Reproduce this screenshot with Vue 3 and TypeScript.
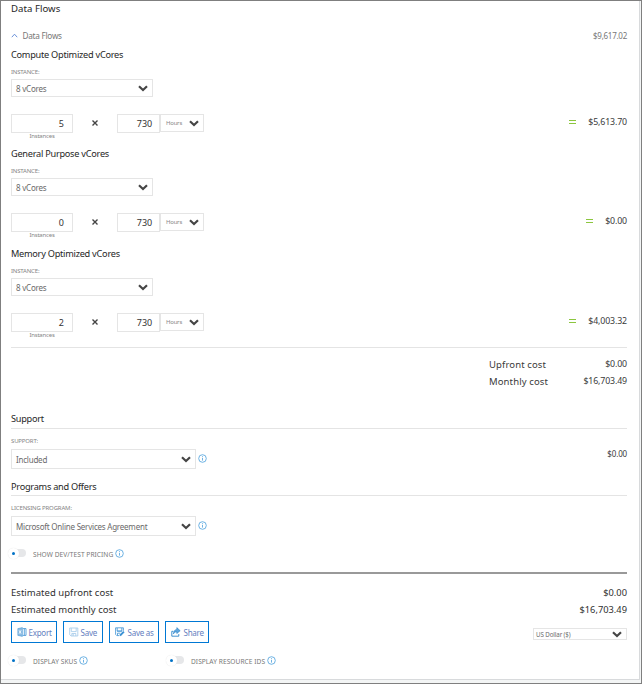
<script setup lang="ts">
import { ref } from 'vue'

interface Tier {
  name: string
  size: string
  instances: number
  hours: number
  total: string
}

const tiers = ref<Tier[]>([
  { name: 'Compute Optimized vCores', size: '8 vCores', instances: 5, hours: 730, total: '$5,613.70' },
  { name: 'General Purpose vCores', size: '8 vCores', instances: 0, hours: 730, total: '$0.00' },
  { name: 'Memory Optimized vCores', size: '8 vCores', instances: 2, hours: 730, total: '$4,003.32' },
])
</script>

<template>
  <div class="frame">
    <main class="panel">
      <h2 class="title">Data Flows</h2>
      <div class="collapse">
        <svg class="caret" viewBox="0 0 7 5"><path d="M.8 4.2 3.5 1.2l2.7 3" /></svg>
        <span class="collapse-name">Data Flows</span>
        <span class="collapse-price">$9,617.02</span>
      </div>

      <section v-for="tier in tiers" :key="tier.name" class="tier">
        <h3 class="heading">{{ tier.name }}</h3>
        <div class="label">INSTANCE:</div>
        <div class="select size-select">
          <span>{{ tier.size }}</span>
          <svg class="chev" viewBox="0 0 10 7"><path d="M1 1.3 5 5l4-3.7" /></svg>
        </div>
        <div class="calc">
          <div class="count">
            <div class="number">{{ tier.instances }}</div>
            <div class="unit">Instances</div>
          </div>
          <svg class="times" viewBox="0 0 6 6"><path d="m.5.5 5 5M5.5.5l-5 5" /></svg>
          <div class="number hours">{{ tier.hours }}</div>
          <div class="select period">
            <span>Hours</span>
            <svg class="chev" viewBox="0 0 10 7"><path d="M1 1.3 5 5l4-3.7" /></svg>
          </div>
          <span class="equals"></span>
          <span class="price">{{ tier.total }}</span>
        </div>
      </section>

      <div class="totals">
        <div class="total-row"><span class="total-name">Upfront cost</span><span class="price">$0.00</span></div>
        <div class="total-row"><span class="total-name">Monthly cost</span><span class="price">$16,703.49</span></div>
      </div>

      <section class="support">
        <h3 class="heading ruled">Support</h3>
        <div class="label">SUPPORT:</div>
        <div class="option">
          <div class="select wide-select">
            <span>Included</span>
            <svg class="chev" viewBox="0 0 10 7"><path d="M1 1.3 5 5l4-3.7" /></svg>
          </div>
          <svg class="info" viewBox="0 0 9 9"><circle cx="4.5" cy="4.5" r="3.8" /><path d="M4.5 3.8v2.8M4.5 2.2v.8" /></svg>
          <span class="small-price">$0.00</span>
        </div>
      </section>

      <section class="programs">
        <h3 class="heading ruled">Programs and Offers</h3>
        <div class="label">LICENSING PROGRAM:</div>
        <div class="option">
          <div class="select wide-select">
            <span>Microsoft Online Services Agreement</span>
            <svg class="chev" viewBox="0 0 10 7"><path d="M1 1.3 5 5l4-3.7" /></svg>
          </div>
          <svg class="info" viewBox="0 0 9 9"><circle cx="4.5" cy="4.5" r="3.8" /><path d="M4.5 3.8v2.8M4.5 2.2v.8" /></svg>
        </div>
        <div class="toggle-row">
          <span class="toggle"><i class="knob"></i></span>
          <span class="toggle-text">SHOW DEV/TEST PRICING</span>
          <svg class="info" viewBox="0 0 9 9"><circle cx="4.5" cy="4.5" r="3.8" /><path d="M4.5 3.8v2.8M4.5 2.2v.8" /></svg>
        </div>
      </section>

      <footer class="estimate">
        <div class="est-row"><span class="est-name">Estimated upfront cost</span><span class="est-price">$0.00</span></div>
        <div class="est-row"><span class="est-name">Estimated monthly cost</span><span class="est-price">$16,703.49</span></div>
        <div class="actions">
          <button class="btn export">
            <svg class="icon" viewBox="0 0 10 10"><path class="solid" d="M.8 1.6 5.4.6v8.8L.8 8.4z" /><path d="M5.8 1.6h3.2v6.8H5.8M7.3 1.6v6.8" /><path class="cut" d="m2.1 3.4 1.9 3.2M4 3.4 2.1 6.6" /></svg>
            <span>Export</span>
          </button>
          <button class="btn save">
            <svg class="icon pale" viewBox="0 0 10 10"><path d="M.7 1h8.1v8H2.1L.7 7.7zM2.3 1.2v3.4h4.9V1.2M2.8 8.8V6.5h4V9M4.2 7v2" /></svg>
            <span>Save</span>
          </button>
          <button class="btn save-as">
            <svg class="icon" viewBox="0 0 10 10"><path d="M4.3 8.6H1.8L.6 7.4V.8h7.8v3M2.2 1v3h4.6V1M2 4.2h5M2.5 8.3V6.2h2.8" /><path class="thick" d="M5 8.6 8.9 4.6" /></svg>
            <span>Save as</span>
          </button>
          <button class="btn share">
            <svg class="icon dark" viewBox="0 0 10 10"><path d="M2.4 4.3H.8v4.9h7V7.1" /><path class="solid" d="M5.8.6 9.2 3.7 5.8 6.6V5C4.2 4.9 3.1 5.5 2.4 7 2.5 4.2 3.8 2.6 5.8 2.4z" /></svg>
            <span>Share</span>
          </button>
          <div class="select currency">
            <span>US Dollar ($)</span>
            <svg class="chev" viewBox="0 0 10 7"><path d="M1 1.3 5 5l4-3.7" /></svg>
          </div>
        </div>
        <div class="toggle-row display">
          <div class="toggle-item first">
            <span class="toggle"><i class="knob"></i></span>
            <span class="toggle-text">DISPLAY SKUS</span>
            <svg class="info" viewBox="0 0 9 9"><circle cx="4.5" cy="4.5" r="3.8" /><path d="M4.5 3.8v2.8M4.5 2.2v.8" /></svg>
          </div>
          <div class="toggle-item">
            <span class="toggle"><i class="knob"></i></span>
            <span class="toggle-text">DISPLAY RESOURCE IDS</span>
            <svg class="info" viewBox="0 0 9 9"><circle cx="4.5" cy="4.5" r="3.8" /><path d="M4.5 3.8v2.8M4.5 2.2v.8" /></svg>
          </div>
        </div>
      </footer>
    </main>
  </div>
</template>

<style>
body { margin: 0; overflow: hidden; }
</style>

<style scoped>
* { box-sizing: border-box; }
.frame {
  width: 642px;
  height: 684px;
  border: 1px solid #7f7f7f;
  background: #f3f5f5;
  font-family: "Noto Sans", "Open Sans", sans-serif;
  color: #3a3a3a;
  white-space: nowrap;
}
.panel {
  width: 639px;
  height: 679px;
  padding: 0 12px 0 10px;
  border-right: 1px solid #d8dadc;
  border-bottom: 1px solid #d8dadc;
  background: #fff;
}
svg { display: block; flex: none; fill: none; overflow: visible; }
.title, .heading { margin: 0; font-weight: 400; color: #262626; }
.title { height: 16px; font-size: 9.6px; line-height: 16px; letter-spacing: .04px; }
.collapse { display: flex; align-items: center; height: 20px; margin-top: 8px; font-size: 8.2px; letter-spacing: -.25px; color: #777; }
.caret { width: 7px; height: 5px; stroke: #5a86d5; stroke-width: .9; }
.collapse-name { margin-left: 4.5px; }
.collapse-price { margin-left: auto; font-size: 8px; letter-spacing: -.26px; }
.tier { height: 99px; padding-top: 2px; }
.tier:nth-of-type(2) { height: 100px; }
.tier:nth-of-type(3) { height: 98px; }
.heading { height: 16px; font-size: 9.2px; line-height: 16px; letter-spacing: -.26px; }
.label { height: 10px; margin-top: 4px; font-size: 6px; line-height: 10px; letter-spacing: -.18px; color: #858585; }
.select {
  display: flex;
  align-items: center;
  justify-content: space-between;
  border: 1px solid #e5e5e5;
  font-size: 8px;
  letter-spacing: -.22px;
  color: #6a6a6a;
}
.chev { width: 10px; height: 7px; stroke: #454545; stroke-width: 2.2; }
.size-select { width: 142px; height: 18px; margin-top: 2px; padding: 0 4px; }
.calc { display: flex; height: 28px; margin-top: 17px; }
.count { width: 62px; }
.number { height: 19px; padding-right: 8px; border: 1px solid #e5e5e5; font-size: 9px; line-height: 18px; text-align: right; color: #333; }
.unit { height: 8px; font-size: 6px; line-height: 7px; text-align: center; letter-spacing: -.2px; color: #858585; }
.times { width: 6px; height: 6px; margin: 6px 19px 0 19px; stroke: #444; stroke-width: 1.4; }
.hours { width: 43px; padding-right: 7px; letter-spacing: -.1px; }
.period { width: 44px; height: 18px; padding: 0 4px 0 5px; font-size: 6px; color: #888; }
.equals { width: 7px; height: 4px; margin: 6px 12px 0 auto; border: solid #8cc63f; border-width: 1px 0; }
.price { font-size: 8.8px; line-height: 16px; letter-spacing: -.14px; color: #3a3a3a; }
.totals { height: 64px; margin-top: 6px; padding: 8px 0 0 478px; border-top: 1px solid #e4e4e4; }
.tier + .totals { margin-top: 5px; }
.total-row { display: flex; justify-content: space-between; height: 17px; line-height: 17px; }
.total-name { font-size: 9.5px; letter-spacing: .12px; }
.total-row .price { line-height: 17px; }
.ruled { height: 18px; border-bottom: 1px solid #e4e4e4; }
.support { height: 67px; }
.support .label, .programs .label { margin-top: 7px; letter-spacing: -.16px; }
.option { display: flex; margin-top: 3px; }
.wide-select { width: 185px; height: 20px; padding: 0 4px; }
.info { width: 9px; height: 9px; stroke: #4a9fdc; stroke-width: .8; }
.option .info { margin: 5px 0 0 1.5px; }
.small-price { margin-left: auto; font-size: 8px; line-height: 9px; letter-spacing: -.15px; }
.programs { height: 94px; }
.programs .heading { line-height: 17px; }
.toggle-row { display: flex; align-items: center; height: 14px; margin-top: 10px; }
.toggle { display: flex; align-items: center; width: 15px; height: 8px; border-radius: 4px; background: #e6e7e9; }
.knob { display: grid; flex: none; place-items: center; width: 11px; height: 11px; margin-left: -3px; border-radius: 50%; background: #fff; box-shadow: 0 0 1px #ddd; }
.knob::after { content: ""; width: 3px; height: 3px; border-radius: 50%; background: #0072c6; }
.toggle-text { margin: 2px 1.5px 0 7px; font-size: 6.6px; letter-spacing: .05px; color: #777; }
.estimate { padding-top: 10px; border-top: 2px solid #999; }
.est-row { display: flex; justify-content: space-between; height: 17px; line-height: 17px; color: #303030; }
.est-name { font-size: 9.5px; letter-spacing: .03px; }
.est-price { font-size: 9.3px; }
.actions { display: flex; height: 22px; margin-top: 3px; }
.btn {
  display: flex;
  align-items: center;
  gap: 1.5px;
  height: 22px;
  margin: 0;
  padding: 0 0 0 5px;
  border: 1px solid #0078d4;
  background: #fff;
  font: 8px "Noto Sans", sans-serif;
  letter-spacing: -.25px;
  color: #6580c0;
}
.export { width: 46px; }
.save { width: 40px; margin-left: 6px; }
.save-as { width: 50px; margin-left: 6px; gap: 2.5px; }
.share { width: 44px; margin-left: 6px; gap: 2.5px; }
.icon { width: 10px; height: 10px; stroke: #3a91d4; stroke-width: .8; }
.icon .solid { fill: #8ebde3; stroke-width: .5; }
.icon .cut { stroke: #fff; stroke-width: .9; }
.icon .thick { stroke-width: 2; }
.icon.pale { stroke: #9fc8e8; }
.icon.dark { stroke: #1477c4; }
.icon.dark .solid { fill: #5fa6dc; }
.currency { width: 94px; height: 12px; margin: 7px 0 0 auto; padding: 0 4px 0 2px; font-size: 6.2px; letter-spacing: -.1px; }
.display { margin-top: 10px; }
.toggle-item { display: flex; align-items: center; }
.first { width: 158px; }
</style>
